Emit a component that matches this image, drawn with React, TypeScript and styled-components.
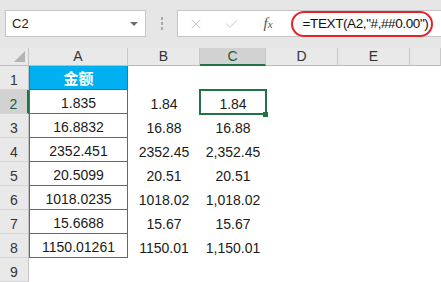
import styled, { createGlobalStyle } from 'styled-components';
import { X, Check } from 'lucide-react';

const GlobalStyle = createGlobalStyle`
  * { box-sizing: border-box; }
  body {
    margin: 0;
    overflow: hidden;
    background: #ffffff;
    font-family: "Liberation Sans", Arial, "Noto Sans CJK SC", sans-serif;
  }
`;

const Page = styled.div`
  width: 441px;
  height: 282px;
  overflow: hidden;
  display: flex;
  flex-direction: column;
`;

const Toolbar = styled.div`
  height: 48px;
  background: #e6e6e6;
  display: flex;
  align-items: flex-start;
  padding: 10px 0 0 5px;
`;

const NameBox = styled.div`
  width: 141px;
  height: 27px;
  background: #fff;
  border: 1px solid #c6c6c6;
  display: flex;
  align-items: center;
  justify-content: space-between;
  padding: 0 7px 0 6px;
  font-size: 13px;
  color: #222;
`;

const DropArrow = styled.span`
  width: 0;
  height: 0;
  border-left: 4px solid transparent;
  border-right: 4px solid transparent;
  border-top: 4px solid #6e6e6e;
  margin-top: 1px;
`;

const Grip = styled.div`
  width: 31px;
  height: 27px;
  display: flex;
  flex-direction: column;
  align-items: center;
  justify-content: center;
  gap: 2px;

  span {
    width: 2px;
    height: 3px;
    background: #a8a8a8;
  }
`;

const FormulaBox = styled.div`
  flex: 1;
  height: 27px;
  background: #fff;
  border: 1px solid #c6c6c6;
  border-right: none;
  display: flex;
  align-items: center;
`;

const IconSlot = styled.div`
  width: 36px;
  display: flex;
  align-items: center;
  justify-content: center;
  color: #c2c2c2;
`;

const Fx = styled.span`
  font-family: "Liberation Serif", "Times New Roman", serif;
  font-style: italic;
  font-size: 15px;
  color: #555;

  small {
    font-size: 11px;
  }
`;

const FormulaText = styled.div`
  margin-left: 5px;
  width: 142px;
  height: 26px;
  border: 2px solid #e2242b;
  border-radius: 13px;
  display: flex;
  align-items: center;
  justify-content: center;
  padding-left: 7px;
  font-size: 13.5px;
  letter-spacing: -0.4px;
  color: #111;
  white-space: nowrap;
`;

const Sheet = styled.div`
  display: grid;
  grid-template-columns: 29px 99px 72px 66px 72px 72px 1fr;
  grid-template-rows: 18px repeat(9, 24px);
  background: #fff;
`;

const Corner = styled.div`
  background: #e9e9e9;
  border-right: 1px solid #c4c4c4;
  border-bottom: 1px solid #bcbcbc;
  position: relative;

  &::after {
    content: '';
    position: absolute;
    right: 3px;
    bottom: 3px;
    border-left: 11px solid transparent;
    border-bottom: 11px solid #b4b4b4;
  }
`;

const ColHead = styled.div<{ $active?: boolean }>`
  background: ${(p) => (p.$active ? '#d2d2d2' : '#e9e9e9')};
  border-right: 1px solid #c8c8c8;
  border-bottom: ${(p) => (p.$active ? '2px solid #217346' : '1px solid #bcbcbc')};
  color: ${(p) => (p.$active ? '#1e5c38' : '#333')};
  font-size: 14px;
  display: flex;
  align-items: flex-end;
  justify-content: center;
  line-height: 16px;
  padding-bottom: ${(p) => (p.$active ? '0' : '1px')};
`;

const RowHead = styled.div<{ $active?: boolean }>`
  background: ${(p) => (p.$active ? '#d2d2d2' : '#e9e9e9')};
  border-right: ${(p) => (p.$active ? '2px solid #217346' : '1px solid #c4c4c4')};
  border-bottom: 1px solid #d6d6d6;
  color: ${(p) => (p.$active ? '#1e5c38' : '#333')};
  font-size: 14px;
  display: flex;
  align-items: flex-end;
  justify-content: center;
  padding-bottom: 1px;
`;

const Cell = styled.div<{ $boxed?: boolean; $head?: boolean; $selected?: boolean }>`
  position: relative;
  display: flex;
  align-items: flex-end;
  justify-content: center;
  padding-bottom: 2px;
  font-size: 14px;
  color: #1a1a1a;
  white-space: nowrap;
  ${(p) =>
    p.$boxed &&
    `
    border-left: 1px solid #2e75b6;
    border-right: 1px solid #2e75b6;
    border-bottom: 1px solid #2e75b6;
  `}
  ${(p) =>
    p.$head &&
    `
    background: #00b0f0;
    color: #fff;
    font-weight: bold;
    font-size: 15px;
    font-family: "Noto Sans CJK SC", sans-serif;
    padding-bottom: 1px;
  `}
  ${(p) =>
    p.$selected &&
    `
    &::before {
      content: '';
      position: absolute;
      left: -1px;
      top: -1px;
      right: -1px;
      bottom: -1px;
      border: 2px solid #217346;
    }
  `}
`;

const FillHandle = styled.span`
  position: absolute;
  right: -2px;
  bottom: -3px;
  width: 5px;
  height: 5px;
  background: #217346;
`;

const colA = ['1.835', '16.8832', '2352.451', '20.5099', '1018.0235', '15.6688', '1150.01261'];
const colB = ['1.84', '16.88', '2352.45', '20.51', '1018.02', '15.67', '1150.01'];
const colC = ['1.84', '16.88', '2,352.45', '20.51', '1,018.02', '15.67', '1,150.01'];
const letters = ['A', 'B', 'C', 'D', 'E', ''];

const App = () => {
  const rows = Array.from({ length: 9 }, (_, i) => i + 1);

  return (
    <Page>
      <GlobalStyle />
      <Toolbar>
        <NameBox>
          <span>C2</span>
          <DropArrow />
        </NameBox>
        <Grip>
          <span />
          <span />
          <span />
        </Grip>
        <FormulaBox>
          <IconSlot>
            <X size={16} strokeWidth={1.4} />
          </IconSlot>
          <IconSlot>
            <Check size={16} strokeWidth={1.4} />
          </IconSlot>
          <IconSlot>
            <Fx>
              f<small>x</small>
            </Fx>
          </IconSlot>
          <FormulaText>=TEXT(A2,"#,##0.00")</FormulaText>
        </FormulaBox>
      </Toolbar>

      <Sheet>
        <Corner />
        {letters.map((l, i) => (
          <ColHead key={i} $active={l === 'C'}>
            {l}
          </ColHead>
        ))}

        {rows.map((r) => {
          const d = r - 2;
          return [
            <RowHead key={`h${r}`} $active={r === 2}>
              {r}
            </RowHead>,
            <Cell key={`a${r}`} $boxed={r <= 8} $head={r === 1}>
              {r === 1 ? '金额' : colA[d] ?? ''}
            </Cell>,
            <Cell key={`b${r}`}>{r > 1 ? colB[d] ?? '' : ''}</Cell>,
            <Cell key={`c${r}`} $selected={r === 2}>
              {r > 1 ? colC[d] ?? '' : ''}
              {r === 2 && <FillHandle />}
            </Cell>,
            <Cell key={`d${r}`} />,
            <Cell key={`e${r}`} />,
            <Cell key={`f${r}`} />,
          ];
        })}
      </Sheet>
    </Page>
  );
};

export default App;
